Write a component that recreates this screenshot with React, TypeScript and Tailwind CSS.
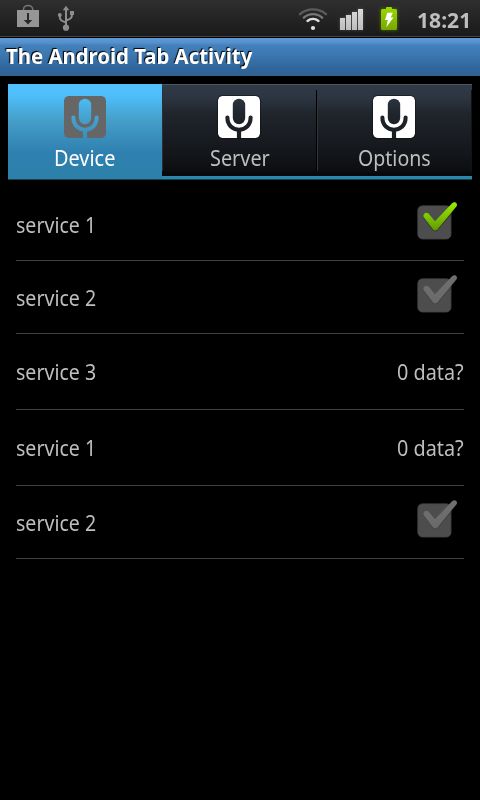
import React from "react";

function Mic({ id, color, halo }: { id: string; color: string; halo?: boolean }) {
  return (
    <svg width="48" height="48" viewBox="0 0 48 48" className={halo ? "mr-px block" : "block"}>
      <defs>
        <mask id={id}>
          <rect x="3" y="4" width="42" height="42" rx="4.5" fill="#fff" />
          <rect x="17.8" y="6.7" width="12.4" height="25.6" rx="6.2" fill="#000" />
          <path d="M12.4 25.6c0 7.8 5.300 12.100 11.600 12.100s11.600-4.300 11.600-12.100" fill="none" stroke="#000" strokeWidth="4.100" strokeLinecap="round" />
          <path d="M24 37v9.500" stroke="#000" strokeWidth="4.200" />
        </mask>
      </defs>
      {halo && <rect x="2.5" y="3.5" width="43" height="43" rx="5" fill="none" stroke="#000" strokeOpacity=".35" />}
      <rect x="3" y="4" width="42" height="42" rx="4.5" fill={color} mask={`url(#${id})`} />
    </svg>
  );
}

function Tab({ label, selected }: { label: string; selected?: boolean }) {
  return (
    <div
      className={
        selected
          ? "flex h-full w-[154px] flex-col items-center bg-[linear-gradient(#51c1ff_0%,#4fbefb_12%,#459fc9_38%,#2f80b0_72%,#2b80a8_100%)] pt-2 text-white"
          : "flex h-[92px] w-[155px] flex-col items-center border-t border-[#4c535a] bg-[linear-gradient(#303b48_0%,#2c3541_14%,#20252c_32%,#181c21_60%,#0d0f12_92%,#050607_100%)] pt-[7px] text-[#bebebe]"
      }
    >
      <Mic id={"mic-" + label} color={selected ? "#666" : "#fff"} halo={!selected} />
      <span className={selected ? "mt-[3px] mr-px text-[22.5px] leading-[30px]" : "mt-[3px] text-[22.5px] leading-[30px]"}>
        <Fit w={label === "Device" ? 61 : label === "Server" ? 60 : 73}>{label}</Fit>
      </span>
    </div>
  );
}

// Condenses a label horizontally to the advance width given.
function Fit({ w, children, end }: { w: number; children: string; end?: boolean }) {
  const ref = React.useRef<HTMLSpanElement>(null);
  const [k, setK] = React.useState(1);
  React.useLayoutEffect(() => {
    if (ref.current) setK(w / ref.current.offsetWidth);
  }, [w]);
  return (
    <span className={end ? "flex justify-end whitespace-nowrap" : "flex whitespace-nowrap"} style={{ width: w }}>
      <span ref={ref} className={end ? "origin-right" : "origin-left"} style={{ transform: `scaleX(${k})` }}>
        {children}
      </span>
    </span>
  );
}

function Check({ on, id }: { on?: boolean; id: string }) {
  return (
    <svg width="48" height="48" viewBox="0 0 48 48" className="block">
      <defs>
        <linearGradient id={id} gradientUnits="userSpaceOnUse" x1="0" y1="2" x2="0" y2="30">
          <stop offset="0" stopColor={on ? "#99ee00" : "#707070"} />
          <stop offset="1" stopColor={on ? "#629c00" : "#6a6a6a"} />
        </linearGradient>
        <clipPath id={id + "-box"}>
          <rect x="1" y="5" width="34" height="34" rx="5" />
        </clipPath>
      </defs>
      <rect x="1.9" y="5.9" width="33" height="33" rx="4.5" fill="#4d4d4d" stroke="#484848" />
      <path d="M10.600 16.400l8.600 11.400L38 6" fill="none" stroke="#202020" strokeOpacity={on ? 0.6 : 0.3} strokeWidth="6.800" strokeLinecap="round" strokeLinejoin="round" clipPath={`url(#${id}-box)`} />
      <path d="M7.700 17.300C6.200 14.600 9.600 11.200 12.600 13.600L19 21.300L36.300 3.100C38.800 .700 42.200 3.400 40.600 6.200L22 28.800C20.500 31 18.200 31 16.700 28.900Z" fill={`url(#${id})`} />
    </svg>
  );
}

const rows = [
  { name: "service 1", kind: "on" },
  { name: "service 2", kind: "off" },
  { name: "service 3", kind: "data" },
  { name: "service 1", kind: "data" },
  { name: "service 2", kind: "off" },
];

export default function App() {
  return (
    <div className="flex h-[800px] w-[480px] flex-col overflow-hidden bg-black font-['Noto_Sans','Open_Sans',sans-serif]">
      <header className="flex h-[37px] shrink-0 items-start border-b border-[#464646] bg-[linear-gradient(#2f2f2f,#1a1a1a)]">
        <svg width="90" height="36" viewBox="0 0 90 36">
          <path d="M23.5 11V9.5a4.6 4 0 0 1 9.2 0V11" fill="none" stroke="#777" strokeWidth="1.5" />
          <path d="M17 10h22v17H17z" fill="#969696" />
          <path d="M27 13h2v7h3.200L28 24.400 23.800 20H27z" fill="#292929" />
          <g fill="none" stroke="#8d8d8d" strokeWidth="2">
            <path d="M66 9v17M66 22.500c-5-1.500-6.300-2.500-6.300-7M66 20.500c5-1.500 6-2.500 6-6.500" />
          </g>
          <path d="M66 5.700l3.300 4.500h-6.600zM70 11h4v4h-4z" fill="#8d8d8d" />
          <circle cx="59.800" cy="15" r="2" fill="#8d8d8d" />
          <circle cx="66" cy="27.700" r="3.100" fill="#8d8d8d" />
        </svg>
        <svg width="120" height="36" viewBox="290 0 120 36" className="ml-[200px]">
          <defs>
            <linearGradient id="bars" x1="0" y1="0" x2="0" y2="1">
              <stop offset="0" stopColor="#dadada" />
              <stop offset="1" stopColor="#bdbdbd" />
            </linearGradient>
            <linearGradient id="bat" x1="0" y1="0" x2="0" y2="1">
              <stop offset="0" stopColor="#9bd900" />
              <stop offset="1" stopColor="#76a700" />
            </linearGradient>
            <filter id="soft" x="-50%" y="-50%" width="200%" height="200%">
              <feGaussianBlur stdDeviation="1.6" />
            </filter>
          </defs>
          <g fill="none" strokeLinecap="round" strokeWidth="2.300">
            <path d="M300 14.200c7.200-6.400 18.800-6.400 26 0" stroke="#5c5c5c" />
            <path d="M303.800 17.700c5.200-4.700 13.200-4.700 18.400 0" stroke="#777" />
            <path d="M307.500 21c3.200-2.700 7.800-2.700 11 0" stroke="#dedede" />
          </g>
          <circle cx="313" cy="28" r="2.1" fill="#e2e2e2" />
          <path d="M340 18h5v12h-5zM346 15h5v15h-5zM352 12h5v18h-5zM358 9h5v21h-5z" fill="#aaa" opacity=".35" filter="url(#soft)" />
          <path d="M340 18h5v12h-5zM346 15h5v15h-5zM352 12h5v18h-5zM358 9h5v21h-5z" fill="url(#bars)" />
          <rect x="380" y="8" width="18" height="23" rx="2" fill="#83b800" opacity=".3" filter="url(#soft)" />
          <path d="M386 9V8q0-1 1-1h4q1 0 1 1v1h3.500q1.500 0 1.500 1.500v18q0 1.500-1.500 1.500h-13q-1.500 0-1.500-1.500v-18q0-1.500 1.500-1.500z" fill="url(#bat)" />
          <path d="M387.200 12.700h5.600l-2 4.800h2.700l-7.200 9.800 1.500-7.300h-2.800z" fill="#fff" />
        </svg>
        <span className="ml-[7px] pt-[5px] text-[21.5px] leading-[30px] font-bold text-[#bebebe]">
          <Fit w={54}>18:21</Fit>
        </span>
      </header>
      <div className="mt-px h-[38px] shrink-0 bg-[linear-gradient(#5f9bd6_0%,#5590cc_12%,#4380bb_20%,#3c77b0_45%,#30659b_80%,#2f628f_100%)] pt-[3px] pl-1.5 text-[21.5px] leading-[30px] font-bold text-white [text-shadow:-1px_-1px_1px_#000]">
        <Fit w={246}>The Android Tab Activity</Fit>
      </div>
      <nav className="mx-2 mt-2 flex h-24 shrink-0 items-start border-b border-[#154052] bg-[#2b86ab]">
        <Tab label="Device" selected />
        <div className="relative flex">
          <Tab label="Server" />
          <Tab label="Options" />
          <i className="absolute top-[6px] left-0 h-[81px] w-px bg-[#2b3035]" />
          <i className="absolute top-[6px] left-[154px] h-[81px] w-[2px] border-l border-black bg-[#32363b]" />
          <i className="absolute top-[6px] right-0 h-[81px] w-px bg-[#101317]" />
        </div>
      </nav>
      <main className="mx-4 mt-2 flex flex-col text-[22.5px] leading-[30px] text-[#bebebe]">
        {rows.map((r, i) => (
          <div
            key={i}
            className={
              r.kind === "data"
                ? "flex h-[76px] items-start justify-between border-b border-[#424242] pt-[23px]"
                : "flex h-[73px] items-start justify-between border-b border-[#424242] pt-[22px]"
            }
          >
            <Fit w={80}>{r.name}</Fit>
            {r.kind === "data" ? (
              <Fit w={67} end>0 data?</Fit>
            ) : (
              <div className="-mt-[10px]">
                <Check id={"check" + i} on={r.kind === "on"} />
              </div>
            )}
          </div>
        ))}
      </main>
    </div>
  );
}
